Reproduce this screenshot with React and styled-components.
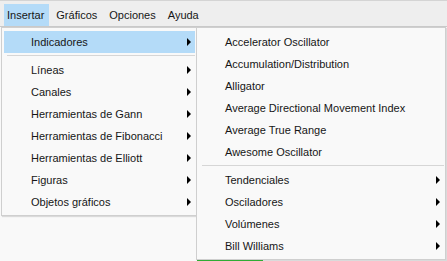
import React from "react";
import styled, { createGlobalStyle } from "styled-components";

const GlobalStyle = createGlobalStyle`
  html, body { margin: 0; padding: 0; background: #f9f9f9; }
  body { font-family: "Liberation Sans", Arial, sans-serif; font-size: 11px; color: #161616; }
`;

const Page = styled.div`
  position: relative;
  width: 447px;
  height: 261px;
  overflow: hidden;
  display: flex;
  flex-direction: column;
  background: #f9f9f9;
`;

const MenuBar = styled.div`
  display: flex;
  align-items: stretch;
  padding: 3px 0 0 4px;
  box-sizing: border-box;
  background: #eeeeee;
  border-top: 1px solid #d4d4d4;
  border-bottom: 1px solid #c9c9c9;
  height: 27px;
`;

const BarItem = styled.div`
  display: flex;
  align-items: center;
  padding: 0 5px 0 3px;
  margin-right: 4px;
  background: ${(p) => (p.$active ? "#b4dbf8" : "transparent")};
`;

const Content = styled.div`
  flex: 1;
  display: flex;
  align-items: flex-end;
  padding-left: 197px;
`;

const GreenBar = styled.div`
  width: 66px;
  height: 3px;
  background: #36c43c;
`;

const Menu = styled.div`
  position: absolute;
  top: ${(p) => p.$top}px;
  left: ${(p) => p.$left}px;
  width: ${(p) => p.$width}px;
  box-sizing: border-box;
  background: #f9f9f9;
  border: 1px solid #cfcfcf;
  padding: 3px 1px 2px 2px;
  box-shadow: 1px 1px 1px rgba(0, 0, 0, 0.12);
`;

const Row = styled.div`
  display: flex;
  align-items: center;
  height: 22px;
  padding-left: ${(p) => p.$indent}px;
  padding-right: 4px;
  background: ${(p) => (p.$active ? "#b4dbf8" : "transparent")};
  white-space: nowrap;
`;

const Label = styled.span`
  flex: 1;
`;

const Arrow = styled.span`
  width: 0;
  height: 0;
  border-top: 4px solid transparent;
  border-bottom: 4px solid transparent;
  border-left: 4px solid #000;
`;

const Separator = styled.div`
  height: 1px;
  margin: 2px 0 3px 3px;
  background: #d6d6d6;
`;

const MenuItem = ({ label, sub, active, indent }) => (
  <Row $active={active} $indent={indent}>
    <Label>{label}</Label>
    {sub && <Arrow />}
  </Row>
);

export default function App() {
  const main = [
    "Líneas",
    "Canales",
    "Herramientas de Gann",
    "Herramientas de Fibonacci",
    "Herramientas de Elliott",
    "Figuras",
    "Objetos gráficos",
  ];
  const indicators = [
    "Accelerator Oscillator",
    "Accumulation/Distribution",
    "Alligator",
    "Average Directional Movement Index",
    "Average True Range",
    "Awesome Oscillator",
  ];
  const groups = ["Tendenciales", "Osciladores", "Volúmenes", "Bill Williams"];
  return (
    <Page>
      <GlobalStyle />
      <MenuBar>
        <BarItem $active>Insertar</BarItem>
        <BarItem>Gráficos</BarItem>
        <BarItem>Opciones</BarItem>
        <BarItem>Ayuda</BarItem>
      </MenuBar>
      <Content>
        <GreenBar />
      </Content>
      <Menu $top={27} $left={1} $width={196}>
        <MenuItem label="Indicadores" sub active indent={27} />
        <Separator />
        {main.map((m) => (
          <MenuItem key={m} label={m} sub indent={27} />
        ))}
      </Menu>
      <Menu $top={27} $left={196} $width={250}>
        {indicators.map((m) => (
          <MenuItem key={m} label={m} indent={26} />
        ))}
        <Separator />
        {groups.map((m) => (
          <MenuItem key={m} label={m} sub indent={26} />
        ))}
      </Menu>
    </Page>
  );
}
